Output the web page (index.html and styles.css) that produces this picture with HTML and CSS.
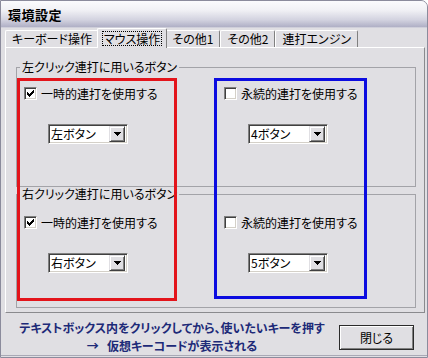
FILE: index.html
```html
<!DOCTYPE html>
<html lang="ja">
<head>
<meta charset="utf-8">
<title>環境設定</title>
<link rel="stylesheet" href="styles.css">
</head>
<body>
<div class="window">
  <div class="titlebar"><span class="title">環境設定</span></div>
  <div class="client">
    <div class="tabs">
      <div class="tab">キーボード操作</div>
      <div class="tab tab-selected"><span class="focus">マウス操作</span></div>
      <div class="tab">その他1</div>
      <div class="tab">その他2</div>
      <div class="tab">連打エンジン</div>
    </div>
    <div class="panel">
      <fieldset class="group group-first">
        <legend>左クリック連打に用いるボタン</legend>
        <div class="cols">
          <div class="col">
            <div class="check"><span class="box"><svg width="7" height="7" viewBox="0 0 7 7" shape-rendering="crispEdges"><path d="M0 2h1v3h-1z M1 3h1v3h-1z M2 4h1v3h-1z M3 3h1v3h-1z M4 2h1v3h-1z M5 1h1v3h-1z M6 0h1v3h-1z"/></svg></span><span>一時的連打を使用する</span></div>
            <div class="combo"><span class="combo-text">左ボタン</span><span class="combo-btn"><svg width="7" height="4" viewBox="0 0 7 4" shape-rendering="crispEdges"><path d="M0 0h7v1h-7z M1 1h5v1h-5z M2 2h3v1h-3z M3 3h1v1h-1z"/></svg></span></div>
          </div>
          <div class="col">
            <div class="check"><span class="box"></span><span>永続的連打を使用する</span></div>
            <div class="combo"><span class="combo-text">4ボタン</span><span class="combo-btn"><svg width="7" height="4" viewBox="0 0 7 4" shape-rendering="crispEdges"><path d="M0 0h7v1h-7z M1 1h5v1h-5z M2 2h3v1h-3z M3 3h1v1h-1z"/></svg></span></div>
          </div>
        </div>
      </fieldset>
      <fieldset class="group group-second">
        <legend>右クリック連打に用いるボタン</legend>
        <div class="cols">
          <div class="col">
            <div class="check"><span class="box"><svg width="7" height="7" viewBox="0 0 7 7" shape-rendering="crispEdges"><path d="M0 2h1v3h-1z M1 3h1v3h-1z M2 4h1v3h-1z M3 3h1v3h-1z M4 2h1v3h-1z M5 1h1v3h-1z M6 0h1v3h-1z"/></svg></span><span>一時的連打を使用する</span></div>
            <div class="combo"><span class="combo-text">右ボタン</span><span class="combo-btn"><svg width="7" height="4" viewBox="0 0 7 4" shape-rendering="crispEdges"><path d="M0 0h7v1h-7z M1 1h5v1h-5z M2 2h3v1h-3z M3 3h1v1h-1z"/></svg></span></div>
          </div>
          <div class="col">
            <div class="check"><span class="box"></span><span>永続的連打を使用する</span></div>
            <div class="combo"><span class="combo-text">5ボタン</span><span class="combo-btn"><svg width="7" height="4" viewBox="0 0 7 4" shape-rendering="crispEdges"><path d="M0 0h7v1h-7z M1 1h5v1h-5z M2 2h3v1h-3z M3 3h1v1h-1z"/></svg></span></div>
          </div>
        </div>
      </fieldset>
    </div>
    <div class="footer">
      <p class="hint">テキストボックス内をクリックしてから、使いたいキーを押す<br>→&nbsp;&nbsp;&nbsp;仮想キーコードが表示される</p>
      <button class="btn" type="button">閉じる</button>
    </div>
  </div>
  <div class="mark mark-red"></div>
  <div class="mark mark-blue"></div>
</div>
</body>
</html>
```

FILE: styles.css
```css
html, body {
  margin: 0;
  padding: 0;
  background: #ffffff;
}

body {
  font-family: "Noto Sans CJK JP", "Noto Sans", sans-serif;
  font-size: 12px;
  color: #000;
}

.window {
  position: relative;
  width: 428px;
  height: 358px;
  box-sizing: border-box;
  background: #e0dfe3;
  border: 1px solid #8b8b9c;
  border-top-right-radius: 7px;
  overflow: hidden;
  display: flex;
  flex-direction: column;
  padding-bottom: 3px;
  font-feature-settings: "palt";
}

.titlebar {
  height: 26px;
  flex: none;
  display: flex;
  align-items: center;
  padding-left: 7px;
  background: linear-gradient(to bottom, #fbfbfd 0%, #f1f1f5 35%, #d3d3e0 72%, #afafc5 100%);
  border-bottom: 1px solid #cfcfda;
}

.title {
  font-weight: bold;
  font-size: 13px;
  letter-spacing: 0.5px;
}

.client {
  flex: 1;
  display: flex;
  flex-direction: column;
  padding: 0 2px 0 4px;
  border-bottom: 1px solid #a9a9b6;
}

.tabs {
  display: flex;
  align-items: flex-end;
  height: 19px;
  position: relative;
  z-index: 1;
}

.tab {
  height: 17px;
  box-sizing: border-box;
  padding: 0 6px;
  line-height: 15px;
  border-top: 1px solid #ffffff;
  border-left: 1px solid #ffffff;
  border-right: 1px solid #808080;
  border-radius: 2px 2px 0 0;
  white-space: nowrap;
  background: #e0dfe3;
}

.tab-selected {
  height: 20px;
  margin: 0 -2px -1px;
  padding: 2px 5px 0;
  position: relative;
  z-index: 2;
}

.focus {
  display: inline-block;
  outline: 1px dotted #000;
  line-height: 13px;
  padding: 0 1px;
}

.panel {
  border: 1px solid;
  border-color: #ffffff #8a8a8e #8a8a8e #ffffff;
  padding: 12px 8px 4px 10px;
}

.group {
  box-sizing: border-box;
  margin: 0;
  min-width: 0;
  border: 1px solid #a3a3a8;
  padding: 13px 0 0 7px;
}

.group-first {
  height: 127px;
}

.group-second {
  height: 121px;
  padding-top: 15px;
}

.group legend {
  padding: 0 2px;
  margin-left: -4px;
  line-height: 14px;
}

.cols {
  display: grid;
  grid-template-columns: 200px 1fr;
}

.check {
  display: flex;
  align-items: center;
  gap: 4px;
  height: 13px;
  line-height: 13px;
  white-space: nowrap;
}

.box {
  width: 13px;
  height: 13px;
  box-sizing: border-box;
  flex: none;
  background: #fff;
  border: 1px solid;
  border-color: #808080 #ffffff #ffffff #808080;
  box-shadow: inset 1px 1px 0 #404040, inset -1px -1px 0 #d4d0c8;
  display: flex;
  align-items: center;
  justify-content: center;
}

.combo {
  display: flex;
  align-items: center;
  width: 80px;
  height: 20px;
  box-sizing: border-box;
  margin: 24px 0 0 24px;
  padding: 2px;
  background: #fff;
  border: 1px solid;
  border-color: #808080 #ffffff #ffffff #808080;
  box-shadow: inset 1px 1px 0 #404040, inset -1px -1px 0 #d4d0c8;
}

.combo-text {
  flex: 1;
  line-height: 16px;
  white-space: nowrap;
}

.combo-btn {
  width: 16px;
  height: 16px;
  flex: none;
  box-sizing: border-box;
  background: #e0dfe3;
  border: 1px solid;
  border-color: #e0dfe3 #404040 #404040 #e0dfe3;
  box-shadow: inset 1px 1px 0 #ffffff, inset -1px -1px 0 #808080;
  display: flex;
  align-items: center;
  justify-content: center;
}

.footer {
  flex: 1;
  display: flex;
  align-items: flex-start;
  padding: 6px 0 0 5px;
}

.hint {
  margin: 0;
  width: 324px;
  text-align: center;
  font-weight: bold;
  color: #1d2a78;
  line-height: 18px;
  white-space: nowrap;
}

.btn {
  width: 75px;
  height: 25px;
  margin: 6px 0 0 5px;
  padding: 0;
  font: inherit;
  color: #000;
  background: #e0dfe3;
  border: 1px solid #2b2b2b;
  box-shadow: inset 1px 1px 0 #ffffff, inset -1px -1px 0 #808080;
}

.mark {
  position: absolute;
  box-sizing: border-box;
  border: 3px solid;
}

.mark-red {
  left: 16px;
  top: 77px;
  width: 160px;
  height: 223px;
  border-color: #e3141b;
}

.mark-blue {
  left: 213px;
  top: 77px;
  width: 153px;
  height: 221px;
  border-color: #0c0ce0;
}
```
